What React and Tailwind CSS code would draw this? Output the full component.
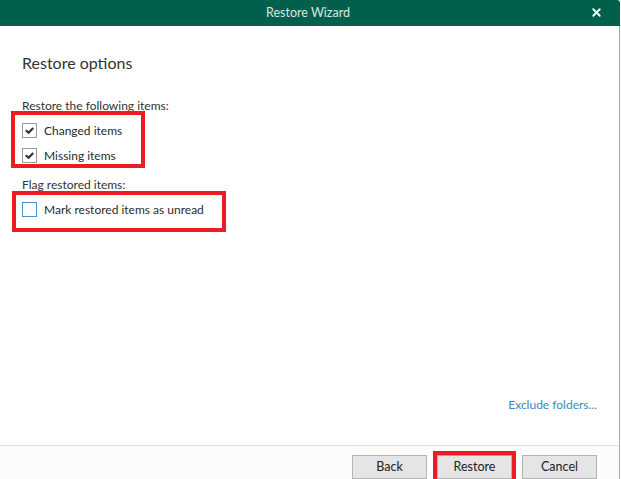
import { X } from "lucide-react";

const font = "font-['Lato','Open_Sans',sans-serif]";

function Check({ checked, focused }) {
  return (
    <span
      className={
        "flex h-[15px] w-[15px] shrink-0 items-center justify-center border bg-white " +
        (focused ? "border-[#4f93cc]" : "border-[#9a9a9a]")
      }
    >
      {checked && (
        <svg width="11" height="11" viewBox="0 0 11 11">
          <polyline
            points="1.8,5.2 4.6,7.8 9.2,3"
            fill="none"
            stroke="#333"
            strokeWidth="2.2"
          />
        </svg>
      )}
    </span>
  );
}

function Row({ checked, focused, label }) {
  return (
    <div className="flex h-[25px] items-center gap-[7px]">
      <Check checked={checked} focused={focused} />
      <span className="pt-[1px] text-[12px] text-[#2b2b2b]">{label}</span>
    </div>
  );
}

function Button({ children }) {
  return (
    <button className="flex h-[24px] w-[75px] items-center justify-center border border-[#b4b4b4] bg-[#e5e5e5] text-[12.5px] text-[#222]">
      {children}
    </button>
  );
}

export default function App() {
  return (
    <div className={`flex h-[479px] w-[621px] flex-col overflow-hidden bg-white ${font}`}>
      {/* title bar */}
      <div className="relative flex h-[26px] w-[620px] shrink-0 items-center justify-center rounded-tr-[3px] bg-[#00604b] pr-[4px]">
        <span className="text-[12.5px] text-[#d9e6e1]">Restore Wizard</span>
        <X className="absolute right-[17px] top-[6px] h-[13px] w-[13px] text-white" strokeWidth={3.4} />
      </div>

      {/* body */}
      <div className="flex w-[620px] flex-1 flex-col border-r border-[#a9a9a9] pl-[22px] pr-[22px]">
        <h1 className="mt-[26px] h-[22px] text-[16px] leading-[22px] text-[#333]">Restore options</h1>

        <p className="mt-[24px] h-[16px] text-[12px] leading-[16px] text-[#333]">
          Restore the following items:
        </p>
        <div className="relative mt-[4px] w-fit">
          <Row checked label="Changed items" />
          <Row checked label="Missing items" />
          <div className="absolute left-[-11px] top-[-7px] h-[57px] w-[134px] border-[4px] border-[#ec1c24]" />
        </div>

        <p className="mt-[9px] h-[16px] text-[12px] leading-[16px] text-[#333]">
          Flag restored items:
        </p>
        <div className="relative mt-[4px] w-fit">
          <Row focused label="Mark restored items as unread" />
          <div className="absolute left-[-10px] top-[-6px] h-[41px] w-[214px] border-[4px] border-[#ec1c24]" />
        </div>

        <div className="flex-1" />
        <div className="mb-[32px] flex justify-end">
          <span className="h-[17px] text-[12px] leading-[17px] text-[#3a87c0]">Exclude folders...</span>
        </div>
      </div>

      {/* footer */}
      <div className="flex h-[34px] w-[620px] shrink-0 justify-end gap-[10px] border-r border-t border-r-[#a9a9a9] border-t-[#dedede] bg-[#fcfcfc] pr-[22px] pt-[9px]">
        <Button>Back</Button>
        <div className="relative">
          <button className="flex h-[24px] w-[75px] items-center justify-center border border-[#b4b4b4] border-t-[#7fb3e0] bg-[#e5e5e5] text-[12.5px] text-[#222]">
            Restore
          </button>
          <div className="absolute left-[-4px] top-[-4px] h-[34px] w-[83px] border-[4px] border-[#ec1c24]" />
        </div>
        <Button>Cancel</Button>
      </div>
    </div>
  );
}
